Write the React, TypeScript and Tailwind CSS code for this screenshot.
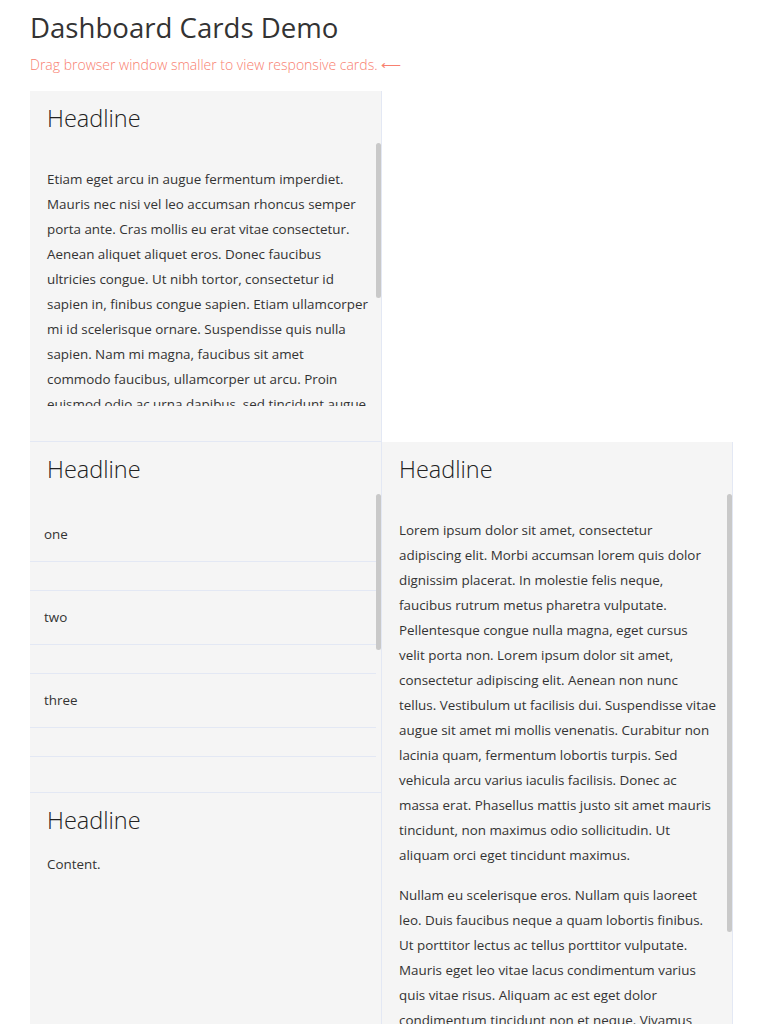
function CardHeader() {
  return (
    <h2 className="h-[52px] shrink-0 px-[17px] pt-[11px] text-[23.5px] leading-[33px] font-light text-[#222]">
      Headline
    </h2>
  );
}

// thin scroll thumb drawn over the right edge of a scroll area
function Thumb({ top, height }: { top: number; height: number }) {
  return (
    <div
      className="absolute right-0 w-[5px] rounded-[3px] bg-[#c9c9c9]"
      style={{ top, height }}
    />
  );
}

function TextCard() {
  return (
    <div className="relative flex h-[351px] flex-col border-r border-b border-[#e3e8f4] bg-[#f5f5f5]">
      <CardHeader />
      <div className="h-[263px] shrink-0 overflow-hidden pl-[17px] pt-[24px]">
        <p className="w-[321px]">
          Etiam eget arcu in augue fermentum imperdiet. Mauris nec nisi vel leo accumsan
          rhoncus semper porta ante. Cras mollis eu erat vitae consectetur. Aenean aliquet
          aliquet eros. Donec faucibus ultricies congue. Ut nibh tortor, consectetur id
          sapien in, finibus congue sapien. Etiam ullamcorper mi id scelerisque ornare.
          Suspendisse quis nulla sapien. Nam mi magna, faucibus sit amet commodo faucibus,
          ullamcorper ut arcu. Proin euismod odio ac urna dapibus, sed tincidunt augue
          tempor. Integer vel nibh at mauris luctus pretium. Praesent vitae sem ut urna
          vulputate cursus. Nulla facilisi. Sed sit amet leo sed nunc finibus varius.
        </p>
      </div>
      <Thumb top={52} height={155} />
    </div>
  );
}

function ListCard() {
  const items = ['one', 'two', 'three', 'four'];
  return (
    <div className="relative flex h-[351px] flex-col border-r border-b border-[#e3e8f4] bg-[#f5f5f5]">
      <CardHeader />
      <div className="mr-[5px] h-[263px] shrink-0 overflow-hidden pt-[14px]">
        <ul>
          {items.map((it) => (
            <li key={it}>
              <div className="flex h-[54px] items-center border-b border-[#e3e8f4] px-[14px]">
                {it}
              </div>
              <div className="h-[29px] border-b border-[#e3e8f4]" />
            </li>
          ))}
        </ul>
      </div>
      <Thumb top={52} height={156} />
    </div>
  );
}

function LongCard() {
  return (
    <div className="relative row-span-2 flex h-[702px] flex-col border-r border-b border-[#e3e8f4] bg-[#f5f5f5]">
      <CardHeader />
      <div className="h-[615px] shrink-0 overflow-hidden pl-[17px] pt-[24px]">
        <div className="w-[317.5px]">
          <p className="mb-[15px]">
            Lorem ipsum dolor sit amet, consectetur adipiscing elit. Morbi accumsan lorem quis
            dolor dignissim placerat. In molestie felis neque, faucibus rutrum metus pharetra
            vulputate. Pellentesque congue nulla magna, eget cursus velit porta non. Lorem
            ipsum dolor sit amet, consectetur adipiscing elit. Aenean non nunc tellus.
            Vestibulum ut facilisis dui. Suspendisse vitae augue sit amet mi mollis venenatis.
            Curabitur non lacinia quam, fermentum lobortis turpis. Sed vehicula arcu varius
            iaculis facilisis. Donec ac massa erat. Phasellus mattis justo sit amet mauris
            tincidunt, non maximus odio sollicitudin. Ut aliquam orci eget tincidunt maximus.
          </p>
          <p className="mb-[15px]">
            Nullam eu scelerisque eros. Nullam quis laoreet leo. Duis faucibus neque a quam
            lobortis finibus. Ut porttitor lectus ac tellus porttitor vulputate. Mauris eget leo
            vitae lacus condimentum varius quis vitae risus. Aliquam ac est eget dolor
            condimentum tincidunt non et neque. Vivamus tincidunt, augue at pharetra tempor,
            turpis lectus luctus sem, sit amet aliquet ipsum nisl non arcu. Integer feugiat
            sapien eu mi pretium, id vehicula libero aliquet.
          </p>
          <p className="mb-[15px]">
            Morbi ut ante vel nibh facilisis accumsan. Cras sed ligula vitae massa tempus
            dapibus. Quisque sed lacus eget ligula porta gravida non a erat. Etiam aliquam
            arcu ac ex ultricies, non venenatis lacus fermentum.
          </p>
        </div>
      </div>
      <Thumb top={52} height={438} />
    </div>
  );
}

function ContentCard() {
  return (
    <div className="flex h-[351px] flex-col border-r border-b border-[#e3e8f4] bg-[#f5f5f5]">
      <CardHeader />
      <p className="mt-[7px] px-[17px]">Content.</p>
    </div>
  );
}

export default function App() {
  return (
    <div className="h-[1024px] overflow-hidden bg-white px-[30px] pt-2 font-['Open_Sans',sans-serif] text-[13.4px] leading-[25px] text-[#333]">
      <h1 className="text-[27.6px] leading-[38px] font-normal text-[#333]">Dashboard Cards Demo</h1>
      <p className="mt-[9px] text-[14px] leading-5 font-light text-[#f8806f]">
        Drag browser window smaller to view responsive cards. ⟵
      </p>
      <div className="mt-4 grid grid-cols-[352px_351px] grid-rows-[351px_351px_351px]">
        <TextCard />
        <div />
        <ListCard />
        <LongCard />
        <ContentCard />
      </div>
    </div>
  );
}
